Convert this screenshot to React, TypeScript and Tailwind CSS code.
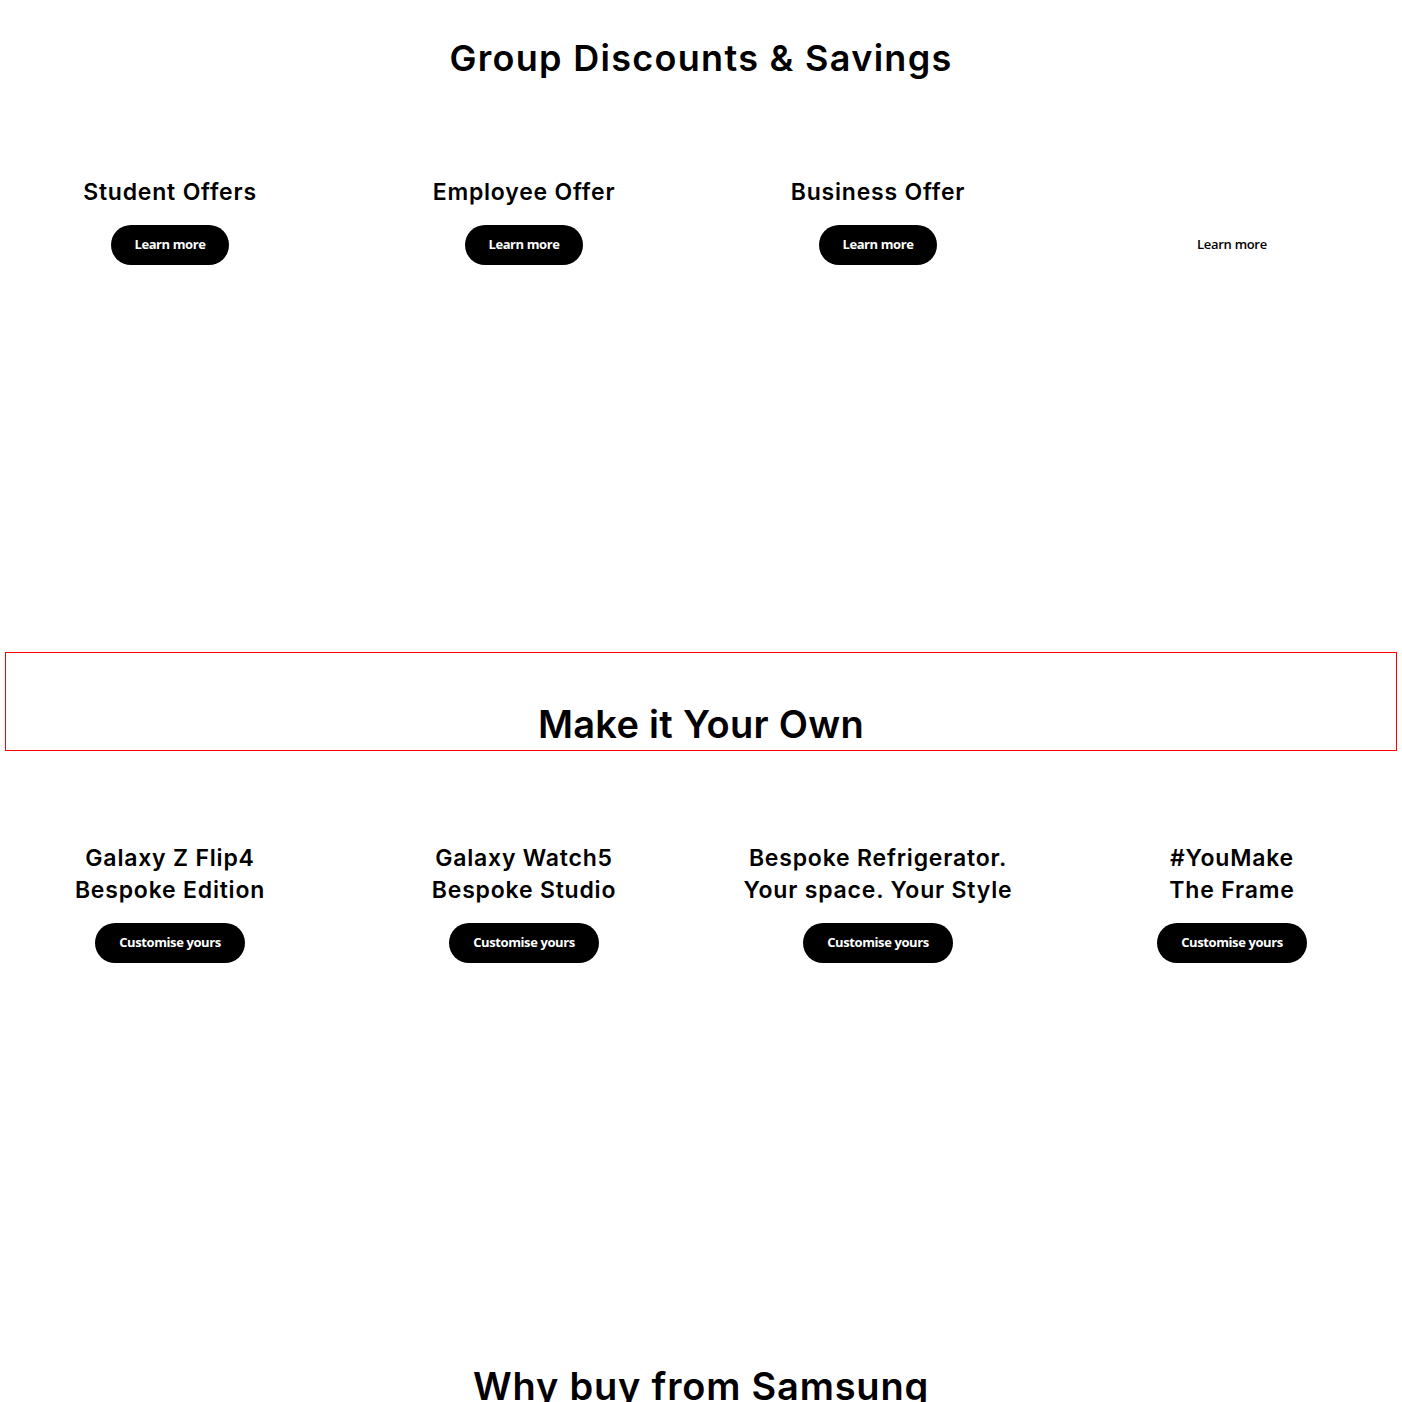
import React from "react";

const heading = "font-['Inter',sans-serif] font-semibold text-black text-center";

function Pill({ label, w }: { label: string; w: string }) {
  return (
    <button
      className={`h-10 ${w} rounded-full bg-black text-white text-[13px] font-bold tracking-[-0.4px] font-['Open_Sans',sans-serif] flex items-center justify-center`}
    >
      {label}
    </button>
  );
}

export default function App() {
  const offers = ["Student Offers", "Employee Offer", "Business Offer"];
  const products = [
    ["Galaxy Z Flip4", "Bespoke Edition"],
    ["Galaxy Watch5", "Bespoke Studio"],
    ["Bespoke Refrigerator.", "Your space. Your Style"],
    ["#YouMake", "The Frame"],
  ];
  return (
    <div className="w-[1402px] h-[1402px] overflow-hidden bg-white">
      <h2 className={`${heading} text-[36px] leading-[40px] mt-[38px] tracking-[1.3px]`}>
        Group Discounts &amp; Savings
      </h2>
      <div className="flex mx-[-7px] mt-[98px]">
        {offers.map((t) => (
          <div key={t} className="w-[354px] flex flex-col items-center">
            <h3 className={`${heading} text-[23px] leading-[32px] font-medium tracking-[0.8px]`}>{t}</h3>
            <div className="mt-[17px]">
              <Pill label="Learn more" w="w-[118px]" />
            </div>
          </div>
        ))}
        <div className="w-[354px] flex flex-col items-center">
          <div className="h-[32px]" />
          <div className="mt-[17px] h-10 flex items-center text-[13px] font-semibold font-['Open_Sans',sans-serif] tracking-[-0.3px] text-black">
            Learn more
          </div>
        </div>
      </div>
      <div className="mx-[5px] mt-[387px] h-[99px] border border-[#ff0000] pt-[47px]">
        <h2 className={`${heading} text-[38px] leading-[48px] font-bold tracking-[0.3px]`}>
          Make it Your Own
        </h2>
      </div>
      <div className="flex mx-[-7px] mt-[91px]">
        {products.map(([a, b]) => (
          <div key={a} className="w-[354px] flex flex-col items-center">
            <h3 className={`${heading} text-[23px] leading-[32px] font-medium tracking-[0.8px]`}>
              {a}
              <br />
              {b}
            </h3>
            <div className="mt-[17px]">
              <Pill label="Customise yours" w="w-[150px]" />
            </div>
          </div>
        ))}
      </div>
      <h2 className={`${heading} text-[38px] leading-[48px] mt-[399px] tracking-[0.8px]`}>Why buy from Samsung</h2>
    </div>
  );
}
